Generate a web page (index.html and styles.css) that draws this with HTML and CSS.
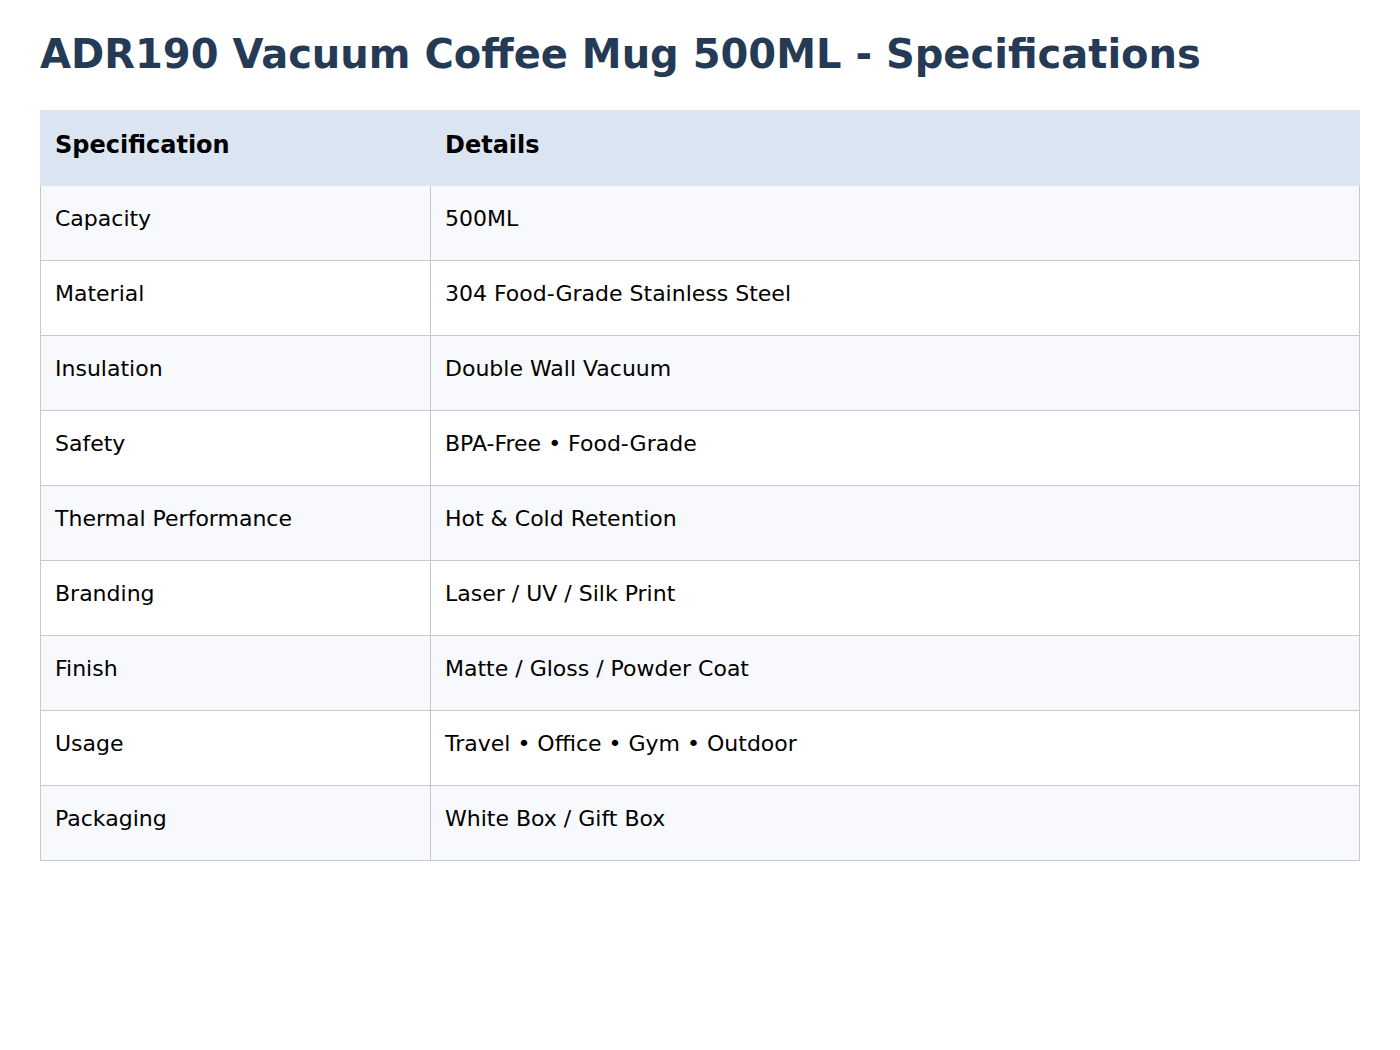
FILE: index.html
```html
<!DOCTYPE html>
<html>
<head>
<meta charset="utf-8">
<link rel="stylesheet" href="styles.css">
</head>
<body>
<h1 class="title">ADR190 Vacuum Coffee Mug 500ML - Specifications</h1>
<table class="spec-table">
  <thead>
    <tr><th class="col-spec">Specification</th><th>Details</th></tr>
  </thead>
  <tbody>
    <tr><td>Capacity</td><td>500ML</td></tr>
    <tr><td>Material</td><td>304 Food-Grade Stainless Steel</td></tr>
    <tr><td>Insulation</td><td>Double Wall Vacuum</td></tr>
    <tr><td>Safety</td><td>BPA-Free • Food-Grade</td></tr>
    <tr><td>Thermal Performance</td><td>Hot &amp; Cold Retention</td></tr>
    <tr><td>Branding</td><td>Laser / UV / Silk Print</td></tr>
    <tr><td>Finish</td><td>Matte / Gloss / Powder Coat</td></tr>
    <tr><td>Usage</td><td>Travel • Office • Gym • Outdoor</td></tr>
    <tr><td>Packaging</td><td>White Box / Gift Box</td></tr>
  </tbody>
</table>
</body>
</html>
```

FILE: styles.css
```css
html, body {
  margin: 0;
  padding: 0;
  background: #ffffff;
}
body {
  padding: 20px 40px;
  font-family: "DejaVu Sans", sans-serif;
  color: #000;
}
.title {
  font-size: 40px;
  font-weight: bold;
  color: #243a55;
  margin: 10px 0 32px 0;
  line-height: 1.2;
}
.spec-table {
  width: 100%;
  border-collapse: collapse;
  font-size: 22px;
}
.spec-table th,
.spec-table td {
  height: 75px;
  box-sizing: border-box;
  padding: 20px 14px 0 14px;
  text-align: left;
  vertical-align: top;
  border: 1px solid #c8c8cc;
  line-height: normal;
}
.spec-table th {
  background: #dae5f1;
  border-color: #dae5f1;
  font-weight: bold;
  font-size: 24px;
}
.col-spec {
  width: 390px;
}
.spec-table tbody tr:nth-child(odd) td {
  background: #f7f9fc;
}
.spec-table tbody tr:nth-child(even) td {
  background: #ffffff;
}
```
